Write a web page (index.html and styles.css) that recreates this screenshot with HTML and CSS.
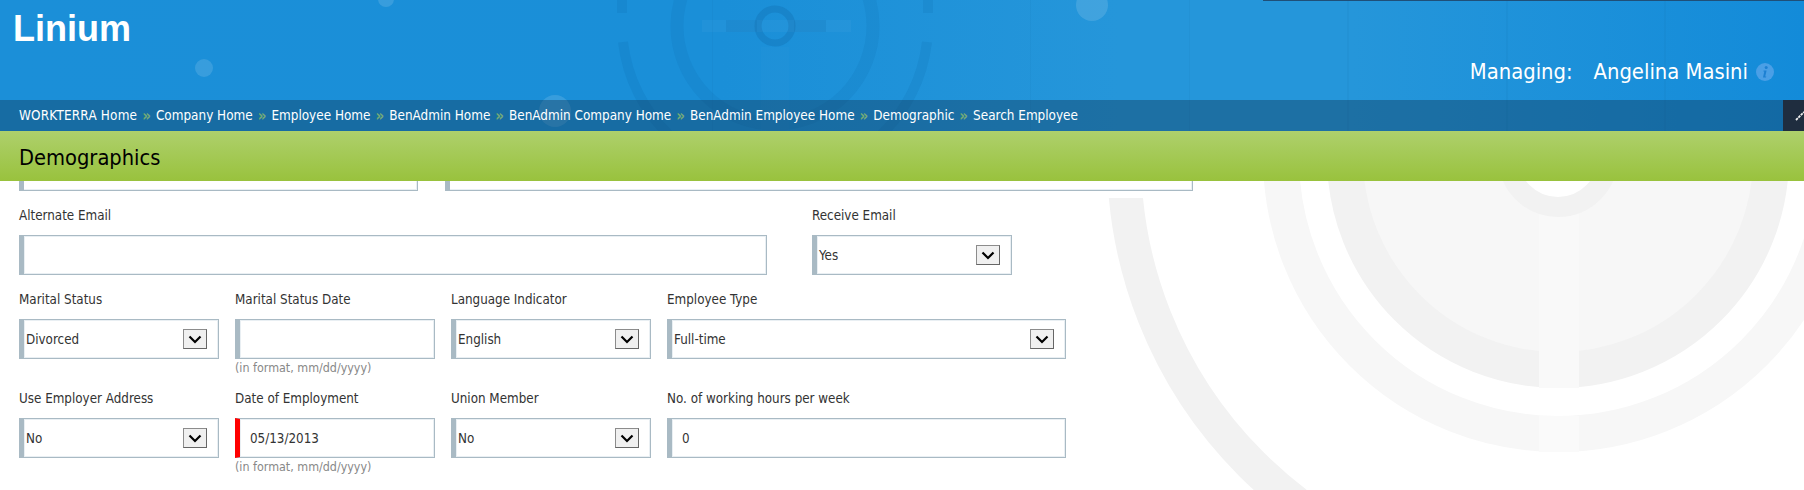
FILE: index.html
```html
<!DOCTYPE html>
<html lang="en">
<head>
<meta charset="utf-8">
<title>Demographics</title>
<link rel="stylesheet" href="styles.css">
</head>
<body>
<div class="page">
  <header class="top">
    <svg class="top-art" width="1804" height="131" viewBox="0 0 1804 131" aria-hidden="true">
      <g fill="none" stroke="#0a5f9e" stroke-opacity=".11">
        <circle cx="775" cy="26" r="98" stroke-width="13"/>
        <circle cx="775" cy="26" r="17" stroke-width="7" stroke-opacity=".25"/>
      </g>
      <g fill="none" stroke="#0a5f9e" stroke-opacity=".13" stroke-width="10">
        <path d="M 622 0 V 13"/>
        <path d="M 928 0 V 13"/>
        <path d="M 623 42 A 153 153 0 0 0 927 42"/>
      </g>
      <rect x="702" y="20" width="149" height="12" fill="#fff" fill-opacity=".03"/>
      <rect x="726" y="20" width="31" height="12" fill="#0a5f9e" fill-opacity=".14"/>
      <rect x="794" y="20" width="32" height="12" fill="#0a5f9e" fill-opacity=".14"/>
      <rect x="761" y="47" width="28" height="84" fill="#fff" fill-opacity=".015"/>
      <g fill="#fff" fill-opacity=".13">
        <circle cx="204" cy="68" r="9"/>
        <circle cx="386" cy="-1" r="8"/>
        <circle cx="555" cy="111" r="16"/>
        <circle cx="1092" cy="5" r="16"/>
      </g>
      <g fill="#0a5f9e" fill-opacity=".07">
        <rect x="712" y="0" width="1" height="131"/>
        <rect x="1030" y="0" width="1" height="131"/>
        <rect x="1189" y="0" width="1" height="131"/>
        <rect x="1347" y="0" width="2" height="131"/>
        <rect x="1506" y="0" width="2" height="131"/>
        <rect x="1664" y="0" width="2" height="131"/>
      </g>
      <rect x="1263" y="0" width="541" height="1" fill="#1f4f78"/>
    </svg>
    <div class="brand-row">
      <div class="brand">Linium</div>
      <div class="managing">
        <span class="managing-label">Managing:</span>
        <span class="managing-name">Angelina Masini</span>
        <svg class="info" width="18" height="18" viewBox="0 0 18 18" aria-hidden="true">
          <circle cx="9" cy="9" r="9" fill="#4a9fe6"/>
          <circle cx="10.2" cy="4.6" r="1.5" fill="#1c80d2"/>
          <path d="M7.6 7.6h3l-1.4 6h1.1l-.3 1H7l1.3-6H7.4z" fill="#1c80d2"/>
        </svg>
      </div>
    </div>
    <nav class="crumbs">
      <a class="crumb">WORKTERRA Home</a><span class="sep">»</span>
      <a class="crumb">Company Home</a><span class="sep">»</span>
      <a class="crumb">Employee Home</a><span class="sep">»</span>
      <a class="crumb">BenAdmin Home</a><span class="sep">»</span>
      <a class="crumb">BenAdmin Company Home</a><span class="sep">»</span>
      <a class="crumb">BenAdmin Employee Home</a><span class="sep">»</span>
      <a class="crumb">Demographic</a><span class="sep">»</span>
      <a class="crumb">Search Employee</a>
      <span class="expand">
        <svg width="21" height="31" viewBox="0 0 21 31" aria-hidden="true">
          <path d="M13 20 L21 12" stroke="#f0f0f0" stroke-width="1.800" stroke-dasharray="2.600 .8"/>
        </svg>
      </span>
    </nav>
  </header>

  <div class="title-bar"><h1 class="title">Demographics</h1></div>

  <main class="content">
    <svg class="watermark" width="1804" height="309" viewBox="0 181 1804 309" aria-hidden="true">
      <defs>
        <clipPath id="arc-clip"><rect x="0" y="198" width="1804" height="300"/></clipPath>
      </defs>
      <circle cx="1558" cy="157" r="434" fill="none" stroke="#f2f2f2" stroke-width="34" clip-path="url(#arc-clip)"/>
      <circle cx="1558" cy="157" r="277" fill="none" stroke="#f7f7f7" stroke-width="36"/>
      <circle cx="1558" cy="157" r="213" fill="#f7f7f7" stroke="#f2f2f2" stroke-width="36"/>
      <rect x="1539" y="200" width="40" height="188" fill="#f9f9f9"/>
      <rect x="1539" y="416" width="40" height="36" fill="#fafafa"/>
      <circle cx="1558" cy="157" r="50" fill="#fff" stroke="#f2f2f2" stroke-width="20"/>
    </svg>

    <div class="stub-row">
      <div class="stub stub-a"></div>
      <div class="stub stub-b"></div>
    </div>

    <div class="row row-email">
      <div class="field">
        <label class="label">Alternate Email</label>
        <div class="box"></div>
      </div>
      <div class="field">
        <label class="label">Receive Email</label>
        <div class="box box-select"><span class="value">Yes</span><span class="drop"><svg width="14" height="9" viewBox="0 0 14 9"><path d="M1.500 1.500 7 7l5.500-5.500" fill="none" stroke="#000" stroke-width="2.200"/></svg></span></div>
      </div>
    </div>

    <div class="row row-four row-status">
      <div class="field">
        <label class="label">Marital Status</label>
        <div class="box box-select"><span class="value">Divorced</span><span class="drop"><svg width="14" height="9" viewBox="0 0 14 9"><path d="M1.500 1.500 7 7l5.500-5.500" fill="none" stroke="#000" stroke-width="2.200"/></svg></span></div>
      </div>
      <div class="field">
        <label class="label">Marital Status Date</label>
        <div class="box"></div>
        <div class="hint">(in format, mm/dd/yyyy)</div>
      </div>
      <div class="field">
        <label class="label">Language Indicator</label>
        <div class="box box-select"><span class="value">English</span><span class="drop"><svg width="14" height="9" viewBox="0 0 14 9"><path d="M1.500 1.500 7 7l5.500-5.500" fill="none" stroke="#000" stroke-width="2.200"/></svg></span></div>
      </div>
      <div class="field">
        <label class="label">Employee Type</label>
        <div class="box box-select"><span class="value">Full-time</span><span class="drop"><svg width="14" height="9" viewBox="0 0 14 9"><path d="M1.500 1.500 7 7l5.500-5.500" fill="none" stroke="#000" stroke-width="2.200"/></svg></span></div>
      </div>
    </div>

    <div class="row row-four row-work">
      <div class="field">
        <label class="label">Use Employer Address</label>
        <div class="box box-select"><span class="value">No</span><span class="drop"><svg width="14" height="9" viewBox="0 0 14 9"><path d="M1.500 1.500 7 7l5.500-5.500" fill="none" stroke="#000" stroke-width="2.200"/></svg></span></div>
      </div>
      <div class="field">
        <label class="label">Date of Employment</label>
        <div class="box box-input box-required"><span class="value">05/13/2013</span></div>
        <div class="hint">(in format, mm/dd/yyyy)</div>
      </div>
      <div class="field">
        <label class="label">Union Member</label>
        <div class="box box-select"><span class="value">No</span><span class="drop"><svg width="14" height="9" viewBox="0 0 14 9"><path d="M1.500 1.500 7 7l5.500-5.500" fill="none" stroke="#000" stroke-width="2.200"/></svg></span></div>
      </div>
      <div class="field">
        <label class="label">No. of working hours per week</label>
        <div class="box box-input"><span class="value">0</span></div>
      </div>
    </div>
  </main>
</div>
</body>
</html>
```

FILE: styles.css
```css
* { box-sizing: border-box; }

html, body {
  margin: 0;
  padding: 0;
  height: 100%;
  background: #fff;
  overflow: hidden;
}

body {
  font-family: "DejaVu Sans Condensed", "DejaVu Sans", sans-serif;
  font-stretch: condensed;
  color: #333;
}

.page {
  width: 1804px;
  height: 490px;
  overflow: hidden;
}

.top {
  position: relative;
  height: 131px;
  display: flex;
  flex-direction: column;
  background: linear-gradient(90deg, #1b8fd8 0%, #1a8fd8 40%, #2596da 62%, #2596da 75%, #138bd9 100%);
}

.top-art {
  position: absolute;
  left: 0;
  top: 0;
}

.brand-row {
  position: relative;
  height: 100px;
  display: flex;
  justify-content: space-between;
  padding: 9px 30px 16px 13px;
}

.brand {
  font-family: "Liberation Sans", sans-serif;
  font-weight: 700;
  font-size: 36px;
  line-height: 40px;
  color: #fff;
}

.managing {
  align-self: flex-end;
  display: flex;
  align-items: center;
  height: 24px;
  font-size: 21.800px;
  line-height: 24px;
  color: #fff;
}

.managing-label { margin-right: 21px; }
.managing-name { margin-right: 8px; }

.crumbs {
  position: relative;
  height: 31px;
  display: flex;
  align-items: center;
  padding-left: 19px;
  background: rgba(20, 60, 90, .42);
  font-size: 13.400px;
  color: #fff;
}

.crumb { white-space: nowrap; }
.crumb:first-child { letter-spacing: .2px; }

.sep {
  margin: 0 5px;
  color: #74aa76;
  font-size: 15px;
  font-weight: 700;
}

.expand {
  margin-left: auto;
  width: 21px;
  height: 31px;
  background: #1f2d3f;
}

.expand svg { display: block; }

.title-bar {
  height: 50px;
  padding: 4px 0 0 19px;
  background: linear-gradient(180deg, #aed06c 0%, #99c23d 100%);
}

.title {
  margin: 0;
  font-size: 21.700px;
  font-weight: 400;
  line-height: 46px;
  color: #000;
}

.content {
  position: relative;
  height: 309px;
  padding-left: 19px;
}

.watermark {
  position: absolute;
  left: 0;
  top: 0;
}

.stub-row, .row { position: relative; display: grid; }

.stub-row {
  grid-template-columns: 399px 748px;
  column-gap: 27px;
  height: 10px;
}

.stub {
  background: #fff;
  border: 1px solid #a9bac4;
  border-left-width: 5px;
  border-top: 0;
  box-shadow: inset 0 -1px 0 #e9eff3, inset -1px 0 0 #e9eff3;
}

.row-email {
  grid-template-columns: 748px 200px;
  column-gap: 45px;
  margin-top: 16px;
}

.row-four {
  grid-template-columns: 200px 200px 200px 399px;
  column-gap: 16px;
}

.row-status { margin-top: 16px; height: 85px; }
.row-work { margin-top: 14px; }

.label {
  display: block;
  height: 16px;
  margin-bottom: 12px;
  font-size: 13.300px;
  line-height: 18px;
  color: #333;
}

.box {
  display: flex;
  align-items: center;
  justify-content: space-between;
  height: 40px;
  background: #fff;
  border: 1px solid #a9bac4;
  border-left-width: 5px;
  box-shadow: inset 1px 1px 0 #e9eff3, inset -1px -1px 0 #e9eff3;
  font-size: 13.300px;
  color: #333;
}

.box-select { padding: 0 11px 0 2px; }
.box-input { padding: 0 10px; }
.box-required { border-left-color: #f00; }

.drop {
  display: flex;
  align-items: center;
  justify-content: center;
  width: 24px;
  height: 20px;
  background: #f0f0f0;
  border: 1px solid #8c8c8c;
  border-right-color: #666;
  border-bottom-color: #666;
}

.drop svg { display: block; }

.hint {
  margin-top: 1px;
  font-size: 12.400px;
  line-height: 16px;
  color: #888;
}
```
